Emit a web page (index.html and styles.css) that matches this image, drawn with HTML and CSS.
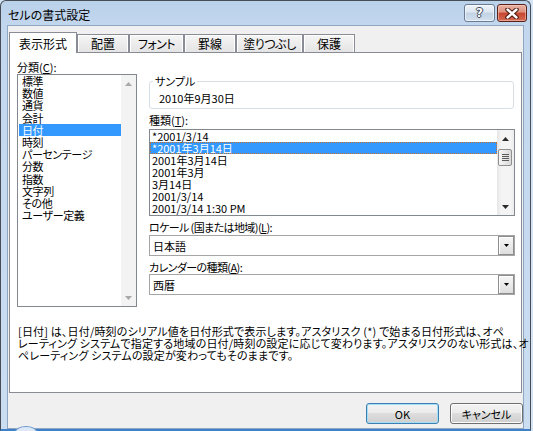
FILE: index.html
```html
<!DOCTYPE html>
<html lang="ja">
<head>
<meta charset="utf-8">
<title>セルの書式設定</title>
<link rel="stylesheet" href="styles.css">
</head>
<body>
<div class="window">
  <div class="titlebar">
    <span class="title">セルの書式設定</span>
    <div class="caption">
      <span class="cap help">?</span>
      <span class="cap close">
        <svg width="14" height="11" viewBox="0 0 14 11"><path d="M2.5 1.5 L11.5 9.5 M11.5 1.5 L2.5 9.5" stroke="#43160f" stroke-width="4.4" stroke-linecap="round"/><path d="M2.5 1.5 L11.5 9.5 M11.5 1.5 L2.5 9.5" stroke="#ffffff" stroke-width="2.4" stroke-linecap="round"/></svg>
      </span>
    </div>
  </div>
  <div class="client">
    <div class="tabs">
      <div class="tab active tab-fmt">表示形式</div>
      <div class="tab tab-align">配置</div>
      <div class="tab tab-font">フォント</div>
      <div class="tab tab-border">罫線</div>
      <div class="tab tab-fill">塗りつぶし</div>
      <div class="tab tab-protect">保護</div>
    </div>
    <div class="panel">
      <div class="main">
        <div class="col-left">
          <div class="label lbl-cat">分類(<u>C</u>):</div>
          <div class="listbox cat-list">
            <ul class="items">
              <li>標準</li>
              <li>数値</li>
              <li>通貨</li>
              <li>会計</li>
              <li class="sel">日付</li>
              <li>時刻</li>
              <li>パーセンテージ</li>
              <li>分数</li>
              <li>指数</li>
              <li>文字列</li>
              <li>その他</li>
              <li>ユーザー定義</li>
            </ul>
            <div class="vscroll disabled">
              <div class="sb-btn"><svg width="7" height="4" viewBox="0 0 7 4"><path d="M0 4 L3.5 0 L7 4 Z"/></svg></div>
              <div class="track"></div>
              <div class="sb-btn"><svg width="7" height="4" viewBox="0 0 7 4"><path d="M0 0 L3.5 4 L7 0 Z"/></svg></div>
            </div>
          </div>
        </div>
        <div class="col-right">
          <fieldset class="sample">
            <legend>サンプル</legend>
            <div class="sample-value">2010年9月30日</div>
          </fieldset>
          <div class="label lbl-type">種類(<u>T</u>):</div>
          <div class="listbox fmt-list">
            <ul class="items">
              <li>*2001/3/14</li>
              <li class="sel focus">*2001年3月14日</li>
              <li>2001年3月14日</li>
              <li>2001年3月</li>
              <li>3月14日</li>
              <li>2001/3/14</li>
              <li>2001/3/14 1:30 PM</li>
            </ul>
            <div class="vscroll">
              <div class="sb-btn"><svg width="7" height="4" viewBox="0 0 7 4"><path d="M0 4 L3.5 0 L7 4 Z"/></svg></div>
              <div class="track">
                <div class="thumb"><svg width="7" height="7" viewBox="0 0 7 7"><path d="M0 0.5 H7 M0 2.5 H7 M0 4.5 H7 M0 6.5 H7" stroke="#5a5a5a" stroke-width="1"/></svg></div>
              </div>
              <div class="sb-btn"><svg width="7" height="4" viewBox="0 0 7 4"><path d="M0 0 L3.5 4 L7 0 Z"/></svg></div>
            </div>
          </div>
          <div class="label lbl-gap lbl-kana">ロケール (国または地域)(<u>L</u>):</div>
          <div class="combo combo-locale">
            <span>日本語</span>
            <span class="dd"><svg width="5" height="3" viewBox="0 0 5 3"><path d="M0 0 L2.5 3 L5 0 Z"/></svg></span>
          </div>
          <div class="label lbl-gap lbl-kana">カレンダーの種類(<u>A</u>):</div>
          <div class="combo combo-cal">
            <span>西暦</span>
            <span class="dd"><svg width="5" height="3" viewBox="0 0 5 3"><path d="M0 0 L2.5 3 L5 0 Z"/></svg></span>
          </div>
        </div>
      </div>
      <p class="desc">[日付] は、日付/時刻のシリアル値を日付形式で表示します。アスタリスク (*) で始まる日付形式は、オペ<br>レーティング システムで指定する地域の日付/時刻の設定に応じて変わります。アスタリスクのない形式は、オ<br>ペレーティング システムの設定が変わってもそのままです。</p>
    </div>
    <div class="buttons">
      <button class="btn default">OK</button>
      <button class="btn">キャンセル</button>
    </div>
  </div>
</div>
<span class="orb"></span>
</body>
</html>
```

FILE: styles.css
```css
* { box-sizing: border-box; }
html, body { margin: 0; padding: 0; }
body {
  width: 533px;
  height: 431px;
  overflow: hidden;
  position: relative;
  background: #d4e4f4;
  font-family: "Noto Sans CJK JP", "Noto Sans", sans-serif;
  font-size: 11px;
  line-height: 12px;
  color: #000;
  font-feature-settings: "palt" 1;
}

.window {
  width: 531px;
  height: 431px;
  border: 1px solid #474d56;
  border-bottom: 2px solid #3f80c6;
  border-radius: 6px 6px 0 0;
  background: linear-gradient(#bad1ea 0, #c2d7ee 25px, #cbddf1 100%);
  padding: 0 6px;
  display: flex;
  flex-direction: column;
}

.titlebar {
  height: 24px;
  flex: none;
  display: flex;
  justify-content: space-between;
  align-items: flex-start;
}
.title {
  margin: 8px 0 0 1px;
  font-size: 12px;
  line-height: 12px;
}
.caption {
  display: flex;
  gap: 2px;
  margin: 3px -3px 0 0;
}
.cap {
  height: 18px;
  border-radius: 3px;
  display: flex;
  align-items: center;
  justify-content: center;
}
.help {
  width: 31px;
  border: 1px solid #6a7c94;
  background: linear-gradient(#eef3f9 0, #dce6f1 45%, #c3d3e5 50%, #d2dfee 100%);
  box-shadow: inset 0 0 0 1px rgba(255, 255, 255, 0.6);
  font: bold 12px/12px "DejaVu Sans", sans-serif;
  color: #fff;
  text-shadow: 1px 0 #3c4757, -1px 0 #3c4757, 0 1px #3c4757, 0 -1px #3c4757;
}
.close {
  width: 30px;
  border: 1px solid #5b2119;
  background: linear-gradient(#e9b1a3 0, #dc8f7c 45%, #c8452f 50%, #d36b53 100%);
  box-shadow: inset 0 0 0 1px rgba(255, 215, 205, 0.5);
}

.client {
  height: 404px;
  flex: none;
  border: 1px solid #8ea6c2;
  background: #f0f0f0;
  padding-top: 6px;
  display: flex;
  flex-direction: column;
}

/* tabs */
.tabs {
  display: flex;
  align-items: flex-end;
  height: 20px;
  margin-left: 1px;
  position: relative;
  z-index: 1;
}
.tab {
  height: 18px;
  border: 1px solid #898c95;
  border-bottom: none;
  background: linear-gradient(#f5f5f5, #e4e4e4);
  box-shadow: inset 1px 1px 0 #fff, inset -1px 0 0 #fff;
  display: flex;
  justify-content: center;
  align-items: center;
  padding-top: 1px;
  white-space: nowrap;
  font-size: 12px;
}
.tab.active {
  height: 21px;
  margin-bottom: -1px;
  background: #fff;
  box-shadow: none;
  padding-top: 2px;
}
.tab-fmt { width: 68px; }
.tab-align { width: 52px; }
.tab-font { width: 55px; letter-spacing: -0.5px; }
.tab-border { width: 52px; }
.tab-fill { width: 67px; letter-spacing: -0.5px; }
.tab-protect { width: 52px; }

/* panel */
.panel {
  margin: 0 1px;
  height: 341px;
  flex: none;
  border: 1px solid #898c95;
  background: #fff;
  padding: 8px 6px 0 7px;
}
.main {
  display: grid;
  grid-template-columns: 120px 366px;
  column-gap: 12px;
  align-items: start;
}
.label {
  height: 12px;
  line-height: 12px;
  white-space: nowrap;
}
.lbl-kana { letter-spacing: -0.6px; }
.lbl-cat { margin-bottom: 1px; }
.lbl-type { margin-top: 5px; }
.lbl-gap { margin-top: 5px; }

.listbox {
  border: 1px solid #828790;
  background: #fff;
  display: flex;
}
.items {
  list-style: none;
  margin: 0;
  padding: 0;
  flex: 1;
  min-width: 0;
}
.items li { white-space: nowrap; }
.cat-list { height: 233px; }
.cat-list .items li {
  height: 12.2px;
  line-height: 12.2px;
  margin-left: 1px;
  padding-left: 3px;
  letter-spacing: -0.4px;
}
.fmt-list {
  height: 87px;
  margin-top: 3px;
}
.fmt-list .items li {
  height: 12px;
  line-height: 12px;
  padding-left: 2px;
}
.sel { background: #3399ff; color: #fff; }
.focus { outline: 1px dotted #c8702a; outline-offset: -1px; }

.vscroll {
  width: 17px;
  flex: none;
  display: flex;
  flex-direction: column;
  background: linear-gradient(to right, #e6e6e6, #f4f4f4 25%, #f4f4f4 80%, #ececec);
}
.cat-list .vscroll {
  width: 15px;
  background: #f3f3f3;
}
.sb-btn {
  height: 17px;
  flex: none;
  display: flex;
  align-items: center;
  justify-content: center;
  fill: #2b2b2b;
}
.disabled .sb-btn { fill: #a8a8a8; }
.track { flex: 1; }
.thumb {
  height: 17px;
  margin: 2px 2px 0 1px;
  border: 1px solid #8f8f8f;
  border-radius: 2px;
  background: linear-gradient(to right, #f6f6f6, #e9e9e9 50%, #d9d9d9);
  display: flex;
  align-items: center;
  justify-content: center;
}

.sample {
  margin: 14px 1px 0 0;
  padding: 5px 0 4px 0;
  min-width: 0;
  border: 1px solid #d5dfe5;
  border-radius: 3px;
}
.sample legend {
  margin-left: 3px;
  padding: 0 2px;
  line-height: 12px;
}
.sample-value {
  padding-left: 9px;
  height: 12px;
  line-height: 12px;
}

.combo {
  height: 21px;
  border: 1px solid #a5a5a5;
  background: #fff;
  display: flex;
  align-items: center;
  justify-content: space-between;
  padding-left: 3px;
}
.combo-locale { margin-top: 2px; }
.combo-cal { margin-top: 1px; }
.dd {
  width: 16px;
  height: 19px;
  border: 1px solid #8d8d8d;
  background: linear-gradient(#f6f6f6, #dedede);
  box-shadow: inset 1px 1px 0 #fff;
  display: flex;
  align-items: center;
  justify-content: center;
  fill: #000;
}

.desc {
  margin: 18px 0 0 1px;
  white-space: nowrap;
  line-height: 12px;
  letter-spacing: 0.17px;
}

/* dialog buttons */
.buttons {
  display: flex;
  justify-content: flex-end;
  gap: 11px;
  margin-top: 10px;
}
.btn {
  width: 73px;
  height: 21px;
  border: 1px solid #707070;
  border-radius: 3px;
  background: linear-gradient(#f3f3f3 0, #ebebeb 50%, #dddddd 50%, #cfcfcf 100%);
  box-shadow: inset 0 0 0 1px #fbfbfb;
  font: inherit;
  line-height: 12px;
  color: #000;
  padding: 0;
}
.btn.default {
  border-color: #3c7fb1;
  box-shadow: inset 0 0 0 1px #a6def7;
}

.orb {
  position: absolute;
  left: 15px;
  top: 426px;
  width: 22px;
  height: 12px;
  border: 1px solid #6e9ad0;
  border-radius: 50%;
  background: #dde9f6;
}
```
